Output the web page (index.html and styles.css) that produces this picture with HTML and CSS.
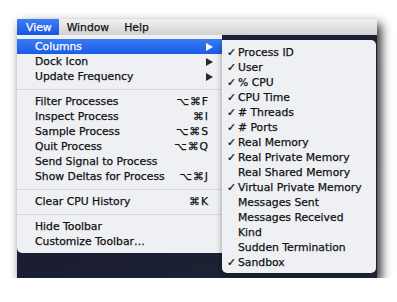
FILE: index.html
```html
<!DOCTYPE html>
<html>
<head>
<meta charset="utf-8">
<link rel="stylesheet" href="styles.css">
</head>
<body>
<div class="screen">
  <div class="menubar">
    <span class="mb-item active">View</span>
    <span class="mb-item">Window</span>
    <span class="mb-item">Help</span>
  </div>
  <div class="desktop">
    <div class="menu main">
      <div class="item hl"><span>Columns</span><span class="arrow"></span></div>
      <div class="item"><span>Dock Icon</span><span class="arrow"></span></div>
      <div class="item"><span>Update Frequency</span><span class="arrow"></span></div>
      <div class="sep"></div>
      <div class="item"><span>Filter Processes</span><span class="key">⌥⌘F</span></div>
      <div class="item"><span>Inspect Process</span><span class="key">⌘I</span></div>
      <div class="item"><span>Sample Process</span><span class="key">⌥⌘S</span></div>
      <div class="item"><span>Quit Process</span><span class="key">⌥⌘Q</span></div>
      <div class="item"><span>Send Signal to Process</span></div>
      <div class="item"><span>Show Deltas for Process</span><span class="key">⌥⌘J</span></div>
      <div class="sep"></div>
      <div class="item"><span>Clear CPU History</span><span class="key">⌘K</span></div>
      <div class="sep"></div>
      <div class="item"><span>Hide Toolbar</span></div>
      <div class="item"><span>Customize Toolbar…</span></div>
    </div>
    <div class="menu sub">
      <div class="sitem"><span class="check">✓</span>Process ID</div>
      <div class="sitem"><span class="check">✓</span>User</div>
      <div class="sitem"><span class="check">✓</span>% CPU</div>
      <div class="sitem"><span class="check">✓</span>CPU Time</div>
      <div class="sitem"><span class="check">✓</span># Threads</div>
      <div class="sitem"><span class="check">✓</span># Ports</div>
      <div class="sitem"><span class="check">✓</span>Real Memory</div>
      <div class="sitem"><span class="check">✓</span>Real Private Memory</div>
      <div class="sitem"><span class="check"></span>Real Shared Memory</div>
      <div class="sitem"><span class="check">✓</span>Virtual Private Memory</div>
      <div class="sitem"><span class="check"></span>Messages Sent</div>
      <div class="sitem"><span class="check"></span>Messages Received</div>
      <div class="sitem"><span class="check"></span>Kind</div>
      <div class="sitem"><span class="check"></span>Sudden Termination</div>
      <div class="sitem"><span class="check">✓</span>Sandbox</div>
    </div>
  </div>
</div>
</body>
</html>
```
FILE: styles.css
```css
html, body {
  margin: 0;
  background: #ffffff;
}
body {
  font-family: "DejaVu Sans", "Liberation Sans", sans-serif;
  font-size: 10.8px;
  color: #111111;
}
.screen {
  margin: 19px 0 0 17px;
  width: 360px;
  height: 259px;
  display: flex;
  flex-direction: column;
  box-shadow: 4px 5px 10px rgba(0, 0, 0, 0.85);
  background: #1c1e37;
}
.menubar {
  height: 16px;
  display: flex;
  background: linear-gradient(#f1f1f1, #d2d2d2);
}
.mb-item {
  display: flex;
  align-items: center;
  padding: 1px 7px 0 8px;
  -webkit-text-stroke: 0.25px #111;
}
.mb-item:first-child {
  padding-left: 9px;
}
.mb-item.active {
  background: linear-gradient(#3b7ef3, #1756e2);
  color: #ffffff;
  -webkit-text-stroke: 0.25px #fff;
}
.desktop {
  flex: 1;
  display: flex;
  align-items: flex-start;
  background: linear-gradient(160deg, #1e2139 0%, #1b1d33 60%, #1d2434 100%);
}
.menu {
  background: #eef0f4;
  box-sizing: border-box;
}
.main {
  width: 205px;
  height: 218px;
  padding: 4px 0 3px;
  border-radius: 0 0 0 5px;
}
.sub {
  width: 154px;
  margin-top: 5px;
  padding: 5px 0 3px;
  border-radius: 0 5px 5px 5px;
  box-shadow: -2px 2px 4px rgba(0, 0, 0, 0.22);
}
.item {
  height: 15px;
  display: flex;
  align-items: center;
  justify-content: space-between;
  padding: 0 9px 0 18px;
  -webkit-text-stroke: 0.25px #111;
}
.item .key {
  padding-right: 4px;
  letter-spacing: 1px;
}
.item.hl {
  background: linear-gradient(#3a7cf2, #1a5be6);
  color: #ffffff;
  -webkit-text-stroke: 0.25px #fff;
}
.arrow {
  width: 0;
  height: 0;
  border-top: 4px solid transparent;
  border-bottom: 4px solid transparent;
  border-left: 7px solid #2a2a2a;
}
.hl .arrow {
  border-left-color: #ffffff;
}
.sep {
  height: 10px;
  display: flex;
  align-items: center;
}
.sep::after {
  content: "";
  flex: 1;
  height: 1px;
  background: #d7d8dd;
}
.sitem {
  height: 15px;
  display: flex;
  align-items: center;
  padding-left: 5px;
  -webkit-text-stroke: 0.25px #111;
}
.check {
  width: 11px;
  flex: none;
}
```
